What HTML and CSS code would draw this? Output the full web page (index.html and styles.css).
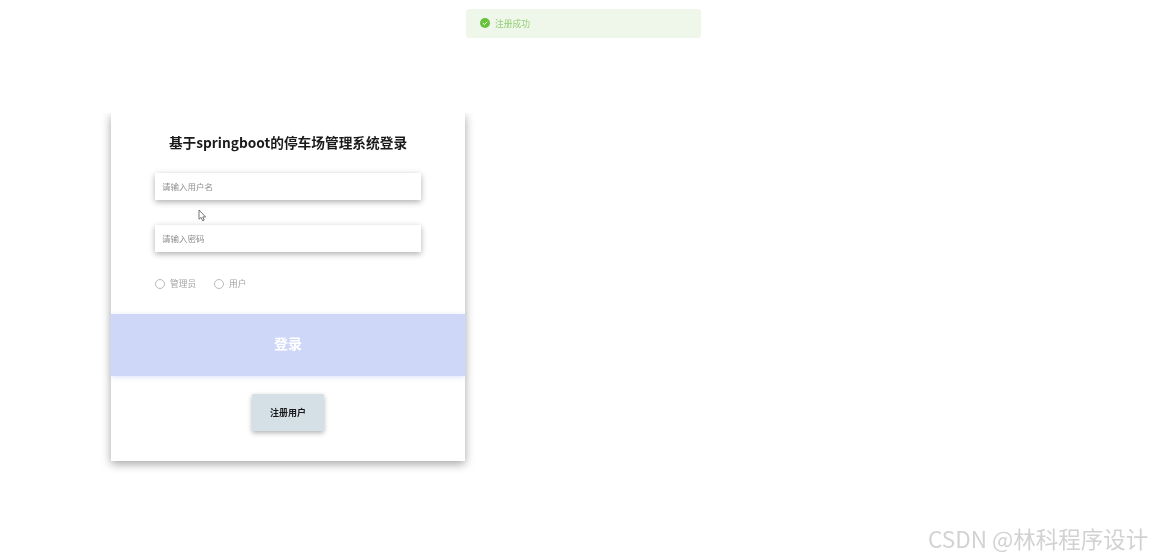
FILE: index.html
```html
<!DOCTYPE html>
<html lang="zh-CN">
<head>
<meta charset="utf-8">
<title>登录</title>
<link rel="stylesheet" href="styles.css">
</head>
<body>
<div class="toast">
  <svg class="toast-icon" viewBox="0 0 10 10" width="10" height="10"><circle cx="5" cy="5" r="5" fill="#67c23a"/><path d="M2.8 5.1 4.4 6.6 7.2 3.7" fill="none" stroke="#fff" stroke-width="1"/></svg>
  <span>注册成功</span>
</div>
<main class="card">
  <h1 class="title">基于springboot的停车场管理系统登录</h1>
  <div class="fields">
    <input class="field" type="text" placeholder="请输入用户名">
    <input class="field" type="password" placeholder="请输入密码">
  </div>
  <div class="roles">
    <label class="role"><span class="radio"></span>管理员</label>
    <label class="role"><span class="radio"></span>用户</label>
  </div>
  <button class="login" type="button">登录</button>
  <div class="register-row"><button class="register" type="button">注册用户</button></div>
</main>
<svg class="cursor" viewBox="0 0 9 13" width="9" height="13"><path d="M1 1V10.2L3.1 8.4 4.6 11.8 6.2 11.1 4.8 7.9H7.6Z" fill="#fff" stroke="#666" stroke-width="0.9"/></svg>
<div class="watermark">CSDN @林科程序设计</div>
</body>
</html>
```
FILE: styles.css
```css
* { box-sizing: border-box; }
html, body { margin: 0; height: 100%; background: #fff; overflow: hidden; }
body {
  position: relative;
  padding: 113px 0 0 111px;
  font-family: "Noto Sans CJK SC", "Liberation Sans", sans-serif;
  filter: blur(0.5px);
}
.card {
  width: 354px;
  height: 348px;
  background: #fff;
  box-shadow: 0 3px 9px 0 rgba(0, 0, 0, 0.36);
  clip-path: inset(0 -20px -20px -20px);
  display: flex;
  flex-direction: column;
}
.title {
  margin: 19px 0 0;
  height: 20px;
  font-size: 13.7px;
  line-height: 20px;
  font-weight: 700;
  color: #1a1a1a;
  text-align: center;
}
.fields {
  margin: 21px 0 0 44px;
  width: 266px;
  display: flex;
  flex-direction: column;
  gap: 25px;
}
.field {
  display: block;
  width: 100%;
  height: 27px;
  border: 0;
  outline: 0;
  padding: 0 7px 1px;
  background: #fff;
  font: 8.5px/26px "Noto Sans CJK SC", sans-serif;
  box-shadow: 0 2px 6px rgba(0, 0, 0, 0.32);
}
.field::placeholder { color: #8e8e8e; opacity: 1; }
.roles {
  margin: 26px 0 0 44px;
  height: 12px;
  display: flex;
  gap: 18px;
}
.role {
  display: flex;
  align-items: center;
  gap: 5px;
  font-size: 8.7px;
  line-height: 12px;
  color: #a4a4a4;
}
.radio {
  width: 10px;
  height: 10px;
  border: 1px solid #bcbcbc;
  border-radius: 50%;
  background: #fff;
}
.login {
  margin-top: 24px;
  height: 62px;
  border: 0;
  padding: 0 0 4px;
  background: #cfd7f9;
  color: #fff;
  font: 700 14px "Noto Sans CJK SC", sans-serif;
  box-shadow: 0 1px 5px rgba(207, 215, 249, 0.8);
}
.register-row {
  margin-top: 18px;
  display: flex;
  justify-content: center;
}
.register {
  width: 72px;
  height: 37px;
  border: 0;
  padding: 0;
  background: #d5dfe6;
  color: #1a1a1a;
  font: 700 9px "Noto Sans CJK SC", sans-serif;
  box-shadow: 0 2px 5px rgba(0, 0, 0, 0.3);
  border-radius: 1px;
}
.toast {
  position: absolute;
  left: 466px;
  top: 9px;
  width: 235px;
  height: 29px;
  padding-left: 14px;
  padding-bottom: 1px;
  display: flex;
  align-items: center;
  gap: 5px;
  background: #eff7ea;
  border-radius: 3px;
  color: #93cd75;
  font-size: 8.75px;
}
.toast-icon { flex: none; }
.cursor { position: absolute; left: 198px; top: 209px; }
.watermark {
  position: absolute;
  left: 928px;
  top: 523px;
  font: 22.5px/30px "Noto Sans CJK SC", sans-serif;
  color: #d2d2d2;
  white-space: nowrap;
}
```
